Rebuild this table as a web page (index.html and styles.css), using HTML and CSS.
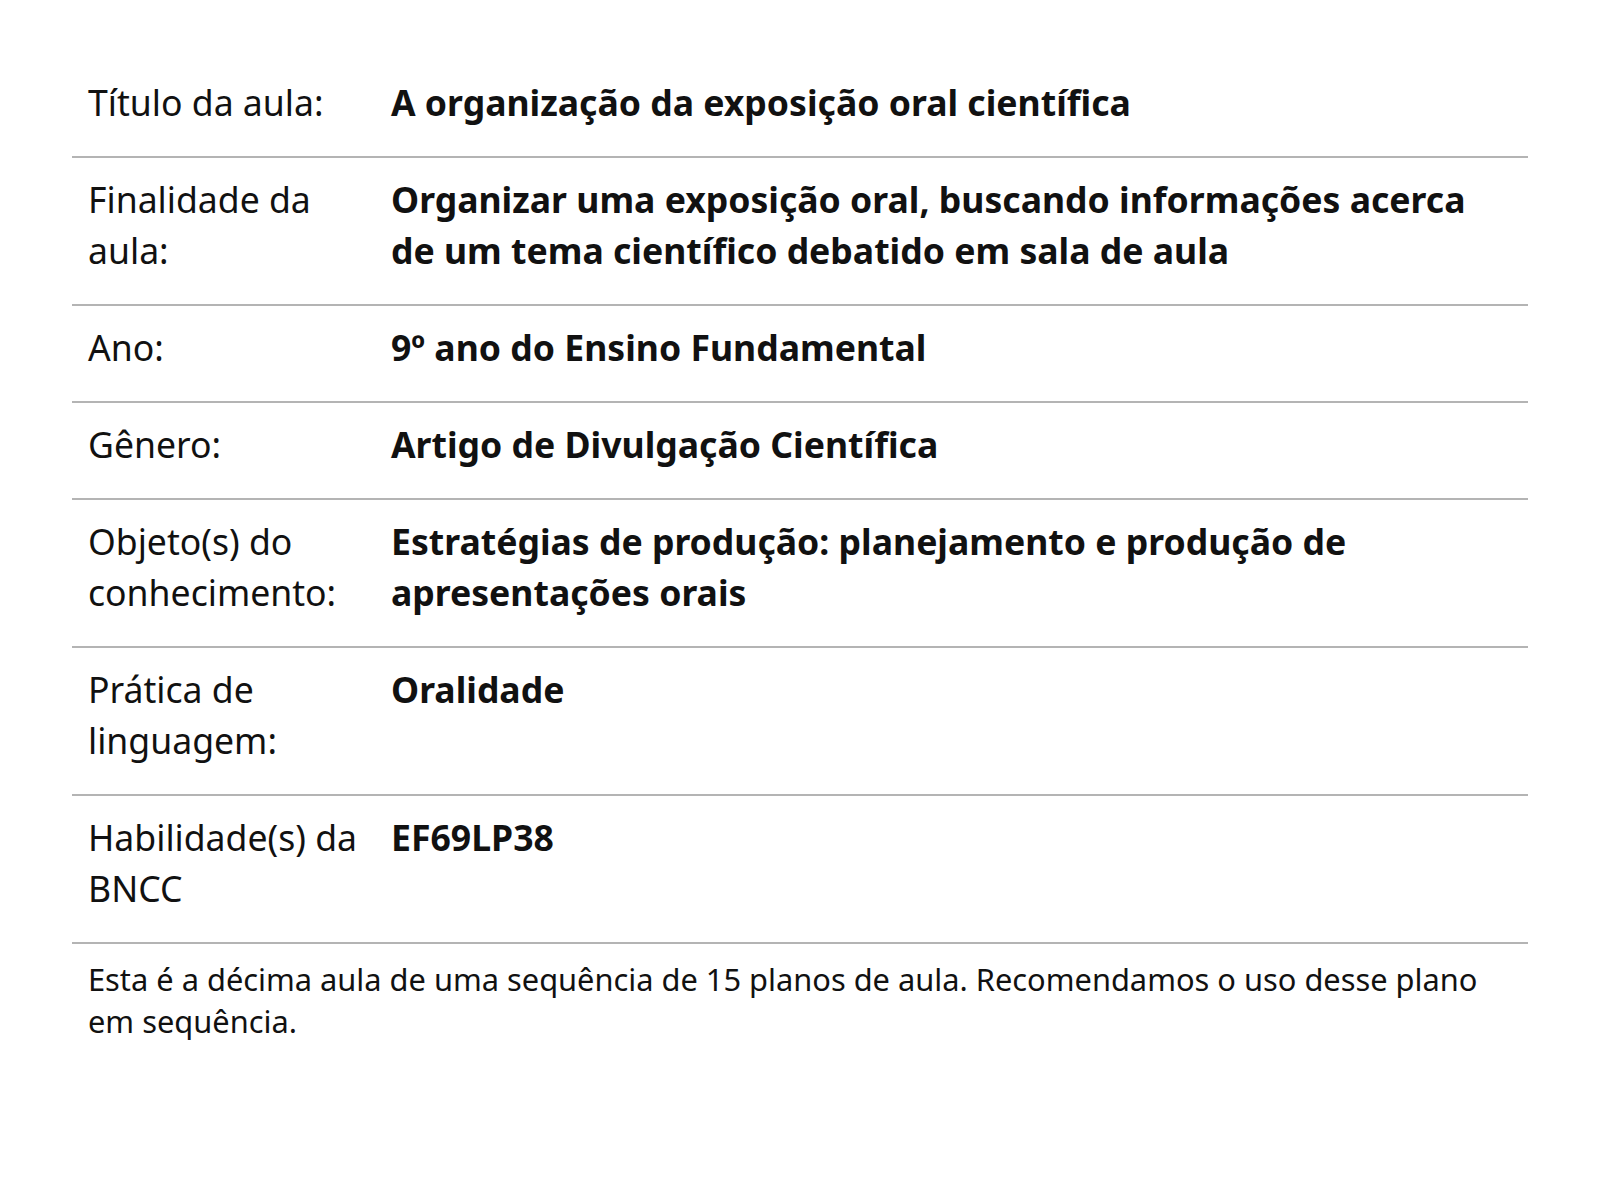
FILE: index.html
```html
<!DOCTYPE html>
<html lang="pt-BR">
<head>
<meta charset="utf-8">
<title>Plano de aula</title>
<link rel="stylesheet" href="styles.css">
</head>
<body>
<main class="page">
  <div class="info">
    <div class="row">
      <div class="label">Título da aula:</div>
      <div class="value">A organização da exposição oral científica</div>
    </div>
    <div class="row">
      <div class="label">Finalidade da aula:</div>
      <div class="value">Organizar uma exposição oral, buscando informações acerca de um tema científico debatido em sala de aula</div>
    </div>
    <div class="row">
      <div class="label">Ano:</div>
      <div class="value">9º ano do Ensino Fundamental</div>
    </div>
    <div class="row">
      <div class="label">Gênero:</div>
      <div class="value">Artigo de Divulgação Científica</div>
    </div>
    <div class="row">
      <div class="label">Objeto(s) do conhecimento:</div>
      <div class="value">Estratégias de produção: planejamento e produção de apresentações orais</div>
    </div>
    <div class="row">
      <div class="label">Prática de linguagem:</div>
      <div class="value">Oralidade</div>
    </div>
    <div class="row">
      <div class="label">Habilidade(s) da BNCC</div>
      <div class="value">EF69LP38</div>
    </div>
  </div>
  <p class="note">Esta é a décima aula de uma sequência de 15 planos de aula. Recomendamos o uso desse plano em sequência.</p>
</main>
</body>
</html>
```

FILE: styles.css
```css
html, body {
  margin: 0;
  padding: 0;
  background: #ffffff;
}

body {
  font-family: "Noto Sans", "Open Sans", "Liberation Sans", sans-serif;
  color: #111111;
}

.page {
  padding: 61px 72px 60px;
}

.info {
  display: flex;
  flex-direction: column;
}

.row {
  display: flex;
  border-bottom: 2px solid #b4b4b4;
}

.label,
.value {
  box-sizing: border-box;
  padding: 16px 16px 28px;
  font-size: 35.6px;
  line-height: 51px;
}

.row-tall .label,
.row-tall .value {
  padding-bottom: 29px;
}

.label {
  flex: 0 0 303px;
  font-weight: 400;
}

.value {
  flex: 1 1 auto;
  font-weight: 700;
}

.note {
  margin: 0;
  padding: 14px 16px 12px;
  font-size: 30.8px;
  font-weight: 400;
  line-height: 42px;
}
```
